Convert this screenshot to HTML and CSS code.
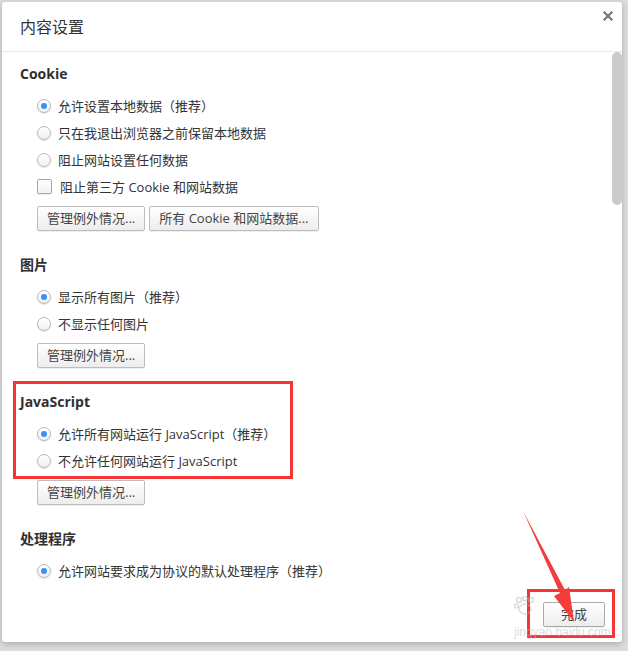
FILE: index.html
```html
<!DOCTYPE html>
<html lang="zh-CN">
<head>
<meta charset="utf-8">
<title>内容设置</title>
<link rel="stylesheet" href="styles.css">
</head>
<body>
<div class="dialog">
  <div class="header">
    <h1 class="title">内容设置</h1>
    <svg class="close" width="10" height="10" viewBox="0 0 10 10"><path d="M1.5 1.5 L8.5 8.5 M8.5 1.5 L1.5 8.5" stroke="#777" stroke-width="2.2" stroke-linecap="square"/></svg>
  </div>
  <div class="content">
    <div class="main">
      <section class="section">
        <h2 class="section-title">Cookie</h2>
        <ul class="options">
          <li class="option"><span class="radio checked"></span>允许设置本地数据（推荐）</li>
          <li class="option"><span class="radio"></span>只在我退出浏览器之前保留本地数据</li>
          <li class="option"><span class="radio"></span>阻止网站设置任何数据</li>
          <li class="option"><span class="checkbox"></span>阻止第三方 Cookie 和网站数据</li>
        </ul>
        <div class="buttons">
          <button class="btn">管理例外情况...</button>
          <button class="btn">所有 Cookie 和网站数据...</button>
        </div>
      </section>
      <section class="section">
        <h2 class="section-title">图片</h2>
        <ul class="options">
          <li class="option"><span class="radio checked"></span>显示所有图片（推荐）</li>
          <li class="option"><span class="radio"></span>不显示任何图片</li>
        </ul>
        <div class="buttons">
          <button class="btn">管理例外情况...</button>
        </div>
      </section>
      <section class="section">
        <h2 class="section-title">JavaScript</h2>
        <ul class="options">
          <li class="option"><span class="radio checked"></span>允许所有网站运行 JavaScript（推荐）</li>
          <li class="option"><span class="radio"></span>不允许任何网站运行 JavaScript</li>
        </ul>
        <div class="buttons">
          <button class="btn">管理例外情况...</button>
        </div>
      </section>
      <section class="section">
        <h2 class="section-title">处理程序</h2>
        <ul class="options">
          <li class="option"><span class="radio checked"></span>允许网站要求成为协议的默认处理程序（推荐）</li>
        </ul>
      </section>
    </div>
    <div class="scrollbar"><div class="thumb"></div></div>
  </div>
  <div class="footer">
    <button class="btn done">完成</button>
  </div>
</div>

<div class="mark mark-js"></div>
<div class="mark mark-done"></div>
<div class="watermark">
  <svg class="wm-paw" width="22" height="20" viewBox="0 0 22 20">
    <circle cx="5" cy="4" r="2.5" fill="none" stroke="currentColor" stroke-width="1.5"/>
    <circle cx="11" cy="2.5" r="2.2" fill="none" stroke="currentColor" stroke-width="1.5"/>
    <circle cx="17" cy="4" r="2.5" fill="none" stroke="currentColor" stroke-width="1.5"/>
    <circle cx="2.5" cy="10" r="2" fill="none" stroke="currentColor" stroke-width="1.5"/>
    <ellipse cx="11" cy="13" rx="6" ry="5" fill="none" stroke="currentColor" stroke-width="1.5"/>
  </svg>
  <span class="wm-url">jingyan.baidu.com</span>
</div>
<svg class="arrow" width="628" height="651" viewBox="0 0 628 651">
  <polygon points="523,511 565,590 569,587 574,622 554,596 560,593" fill="#f43c3c"/>
</svg>
</body>
</html>
```
FILE: styles.css
```css
* { box-sizing: border-box; }

html, body {
  margin: 0;
  padding: 0;
}

body {
  width: 628px;
  height: 651px;
  background: #dcdcdc;
  font-family: "Open Sans", "Noto Sans CJK SC", sans-serif;
  color: #333;
  padding: 2px 0 0 2px;
  overflow: hidden;
}

.dialog {
  width: 620px;
  height: 640px;
  background: #fff;
  border-radius: 3px;
  box-shadow: 0 2px 6px rgba(0, 0, 0, 0.22);
  display: flex;
  flex-direction: column;
}

.header {
  height: 50px;
  border-bottom: 1px solid #e8e8e8;
  display: flex;
  justify-content: space-between;
  align-items: center;
  padding: 0 9px 0 18px;
  flex-shrink: 0;
}

.title {
  margin: 0;
  font-size: 16px;
  font-weight: normal;
  color: #333;
  line-height: 20px;
}

.close {
  align-self: flex-start;
  margin-top: 9px;
}

.content {
  flex: 1;
  display: flex;
  min-height: 0;
}

.main {
  flex: 1;
  padding: 12px 0 0 18px;
}

.scrollbar {
  width: 10px;
  flex-shrink: 0;
}

.thumb {
  height: 153px;
  background: #cbcbcb;
  border-radius: 5px;
}

.section + .section {
  margin-top: 24px;
}

.section-title {
  margin: 0;
  font-size: 14px;
  font-weight: bold;
  line-height: 20px;
  color: #303030;
}

.options {
  list-style: none;
  margin: 0;
  padding: 8px 0 0 17px;
}

.option {
  display: flex;
  align-items: center;
  height: 27px;
  font-size: 13px;
  color: #333;
}

.radio {
  width: 14px;
  height: 14px;
  border: 1px solid #b8b8b8;
  border-radius: 50%;
  background: linear-gradient(#ffffff, #f0f0f0);
  box-shadow: 0 1px 1px rgba(0, 0, 0, 0.1);
  margin-right: 7px;
  display: flex;
  align-items: center;
  justify-content: center;
  flex-shrink: 0;
}

.radio.checked::after {
  content: "";
  width: 6px;
  height: 6px;
  border-radius: 50%;
  background: #3d8ff2;
}

.checkbox {
  width: 15px;
  height: 15px;
  border: 1px solid #a6a6a6;
  border-radius: 2px;
  background: linear-gradient(#ffffff, #f2f2f2);
  box-shadow: 0 1px 1px rgba(0, 0, 0, 0.08);
  margin-right: 8px;
  flex-shrink: 0;
}

.buttons {
  display: flex;
  gap: 4px;
  margin: 6px 0 0 17px;
}

.btn {
  height: 25px;
  padding: 0 9px;
  border: 1px solid #bdbdbd;
  border-radius: 2px;
  background: linear-gradient(#ffffff, #ededed);
  box-shadow: 0 1px 0 rgba(0, 0, 0, 0.06);
  font-family: "Open Sans", "Noto Sans CJK SC", sans-serif;
  font-size: 13px;
  color: #444;
  line-height: 21px;
}

.footer {
  height: 50px;
  flex-shrink: 0;
  display: flex;
  justify-content: flex-end;
  align-items: flex-start;
  padding: 10px 17px 0 0;
}

.done {
  padding: 0 17px;
  border-color: #a9a9a9;
}

.mark {
  position: absolute;
  border: 3px solid #f33535;
}

.mark-js {
  left: 13px;
  top: 381px;
  width: 280px;
  height: 98px;
}

.mark-done {
  left: 527px;
  top: 589px;
  width: 88px;
  height: 49px;
}

.watermark {
  position: absolute;
  left: 514px;
  top: 596px;
  width: 90px;
  display: flex;
  flex-direction: column;
  gap: 10px;
  color: rgba(185, 185, 185, 0.5);
  font-family: "Liberation Sans", "Noto Sans CJK SC", sans-serif;
  pointer-events: none;
}

.wm-url {
  font-size: 12px;
  line-height: 13px;
}

.arrow {
  position: absolute;
  left: 0;
  top: 0;
  pointer-events: none;
}
```
